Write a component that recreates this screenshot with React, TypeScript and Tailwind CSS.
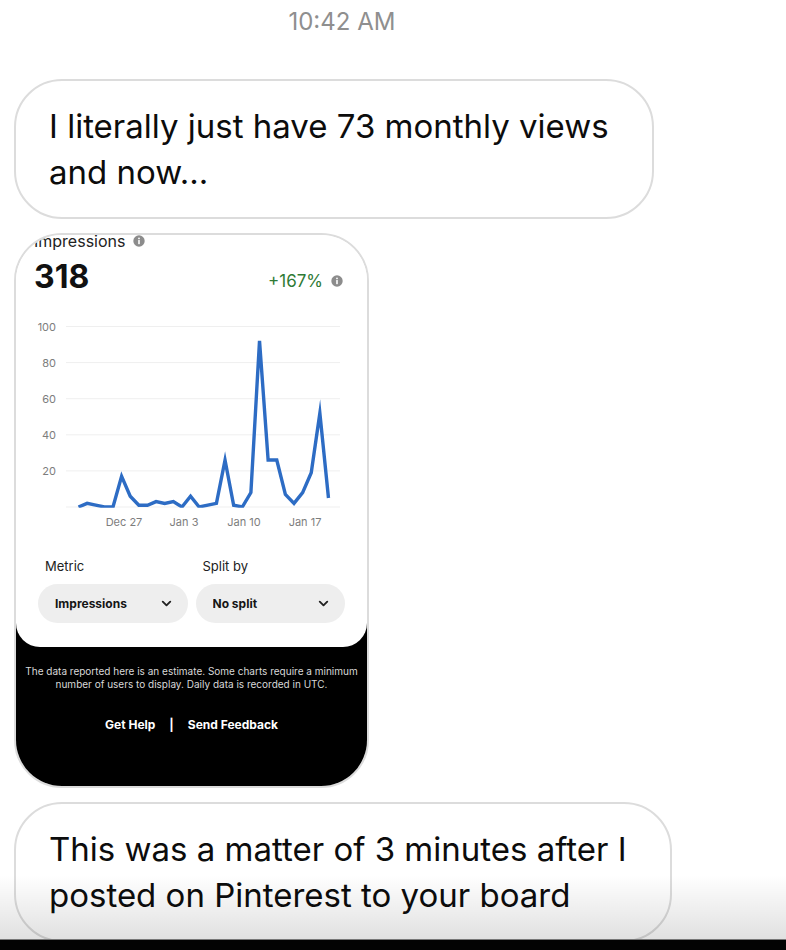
import type { ReactNode } from "react";
import { ChevronDown } from "lucide-react";

// Daily impressions, Dec 22 to Jan 20
const impressions = [
  0, 2, 1, 0, 0, 17, 6, 1, 1, 3, 2, 3, 0, 6, 0, 1, 2, 26, 1, 0, 8, 92, 26, 26, 7, 2, 8, 19, 52, 5,
];
const ticks = [100, 80, 60, 40, 20];
const dates = [
  { label: "Dec 27", x: 108 },
  { label: "Jan 3", x: 168 },
  { label: "Jan 10", x: 228 },
  { label: "Jan 17", x: 289 },
];

const baseline = 191;
const toX = (i: number) => 62.5 + i * 8.62;
const toY = (v: number) => baseline - v * 1.805;

function Bubble({ children }: { children: ReactNode }) {
  return (
    <div className="w-fit rounded-[48px] border-2 border-[#dcdcdc] bg-white py-[22px] pl-[33px] pr-[43px] text-[33px] leading-[46px] text-[#0c0c0c]">
      {children}
    </div>
  );
}

function InfoDot() {
  return (
    <svg viewBox="0 0 12 12" className="size-3" aria-hidden="true">
      <circle cx="6" cy="6" r="5.7" fill="#8c8c8c" />
      <circle cx="6" cy="3.4" r="0.9" fill="#fff" />
      <rect x="5.2" y="5" width="1.6" height="4.2" rx="0.4" fill="#fff" />
    </svg>
  );
}

function Chart() {
  const points = impressions.map((v, i) => `${toX(i)},${toY(v)}`).join(" ");
  return (
    <svg viewBox="0 0 351 220" className="block w-full" role="img" aria-label="Impressions">
      <clipPath id="plot">
        <rect x="50" y="0" width="280" height={baseline + 0.8} />
      </clipPath>
      {[...ticks, 0].map((t) => (
        <line key={t} x1="50" x2="324" y1={toY(t)} y2={toY(t)} stroke="#efefef" />
      ))}
      <g fill="#7d7d7d" fontSize="11">
        {ticks.map((t) => (
          <text key={t} x="40" y={toY(t) + 4} textAnchor="end">
            {t}
          </text>
        ))}
        {dates.map((d) => (
          <text key={d.label} x={d.x} y="210" textAnchor="middle">
            {d.label}
          </text>
        ))}
      </g>
      <polyline
        points={points}
        clipPath="url(#plot)"
        fill="none"
        stroke="#2d6cc4"
        strokeWidth="3.4"
        strokeMiterlimit="10"
      />
    </svg>
  );
}

function Picker({ id, label, options }: { id: string; label: string; options: string[] }) {
  return (
    <div className="flex-1">
      <label htmlFor={id} className="block pl-[7px] text-[13px] leading-5 text-[#222]">
        {label}
      </label>
      <div className="relative mt-2">
        <select
          id={id}
          className="h-[39px] w-full appearance-none rounded-full bg-[#eeeeee] pl-[17px] pr-8 text-xs font-bold text-[#151515]"
        >
          {options.map((o) => (
            <option key={o}>{o}</option>
          ))}
        </select>
        <ChevronDown
          className="pointer-events-none absolute right-[14px] top-3 size-[15px] text-[#222]"
          strokeWidth={3}
        />
      </div>
    </div>
  );
}

function AnalyticsCard() {
  return (
    <div className="w-[355px] overflow-hidden rounded-[48px] border-2 border-[#dcdcdc] bg-white">
      <div className="relative z-10 rounded-b-3xl bg-white pb-6">
        {/* Title is scrolled partly out of view */}
        <div className="-mt-1 flex items-center gap-2 pl-[18px] text-base leading-5 text-[#222]">
          Impressions <InfoDot />
        </div>
        <div className="flex items-center justify-between pl-[18px] pr-6 pt-[5px]">
          <span className="text-[32px] font-bold leading-[42px] text-[#111]">318</span>
          <span className="flex items-center gap-2 pt-2 text-[17px] leading-6 text-[#2f7a35]">
            +167% <InfoDot />
          </span>
        </div>
        <div className="pt-[18px]">
          <Chart />
        </div>
        <div className="flex gap-2 px-[22px] pt-5">
          <Picker id="metric" label="Metric" options={["Impressions", "Saves"]} />
          <Picker id="split" label="Split by" options={["No split", "Device"]} />
        </div>
      </div>
      {/* Black area reaches up behind the panel's rounded corners */}
      <div className="-mt-6 bg-black pb-[51px] pt-[42px] text-center text-white">
        <p className="text-[10px] leading-[13px] text-[#d8d8d8]">
          The data reported here is an estimate. Some charts require a minimum
          <br />
          number of users to display. Daily data is recorded in UTC.
        </p>
        <div className="mt-6 flex justify-center gap-[14px] text-xs font-bold leading-5">
          <a href="#help">Get Help</a>
          <span>|</span>
          <a href="#feedback">Send Feedback</a>
        </div>
      </div>
    </div>
  );
}

export default function App() {
  return (
    <div className="flex h-screen flex-col bg-white font-['Inter',sans-serif]">
      <main className="relative flex-1 overflow-hidden">
        <time className="block w-[87%] pt-2 text-center text-2xl leading-7 text-[#8f8f8f]">
          10:42 AM
        </time>
        <div className="flex flex-col gap-[14px] pl-[14px] pt-[43px]">
          <Bubble>
            I literally just have 73 monthly views
            <br />
            and now...
          </Bubble>
          <AnalyticsCard />
          <Bubble>
            This was a matter of 3 minutes after I
            <br />
            posted on Pinterest to your board
          </Bubble>
        </div>
        <div className="pointer-events-none absolute inset-x-0 bottom-0 h-16 bg-linear-to-b from-black/0 to-black/12" />
      </main>
      <div className="h-[11px] shrink-0 border-t border-[#777] bg-[#030303]" />
    </div>
  );
}
